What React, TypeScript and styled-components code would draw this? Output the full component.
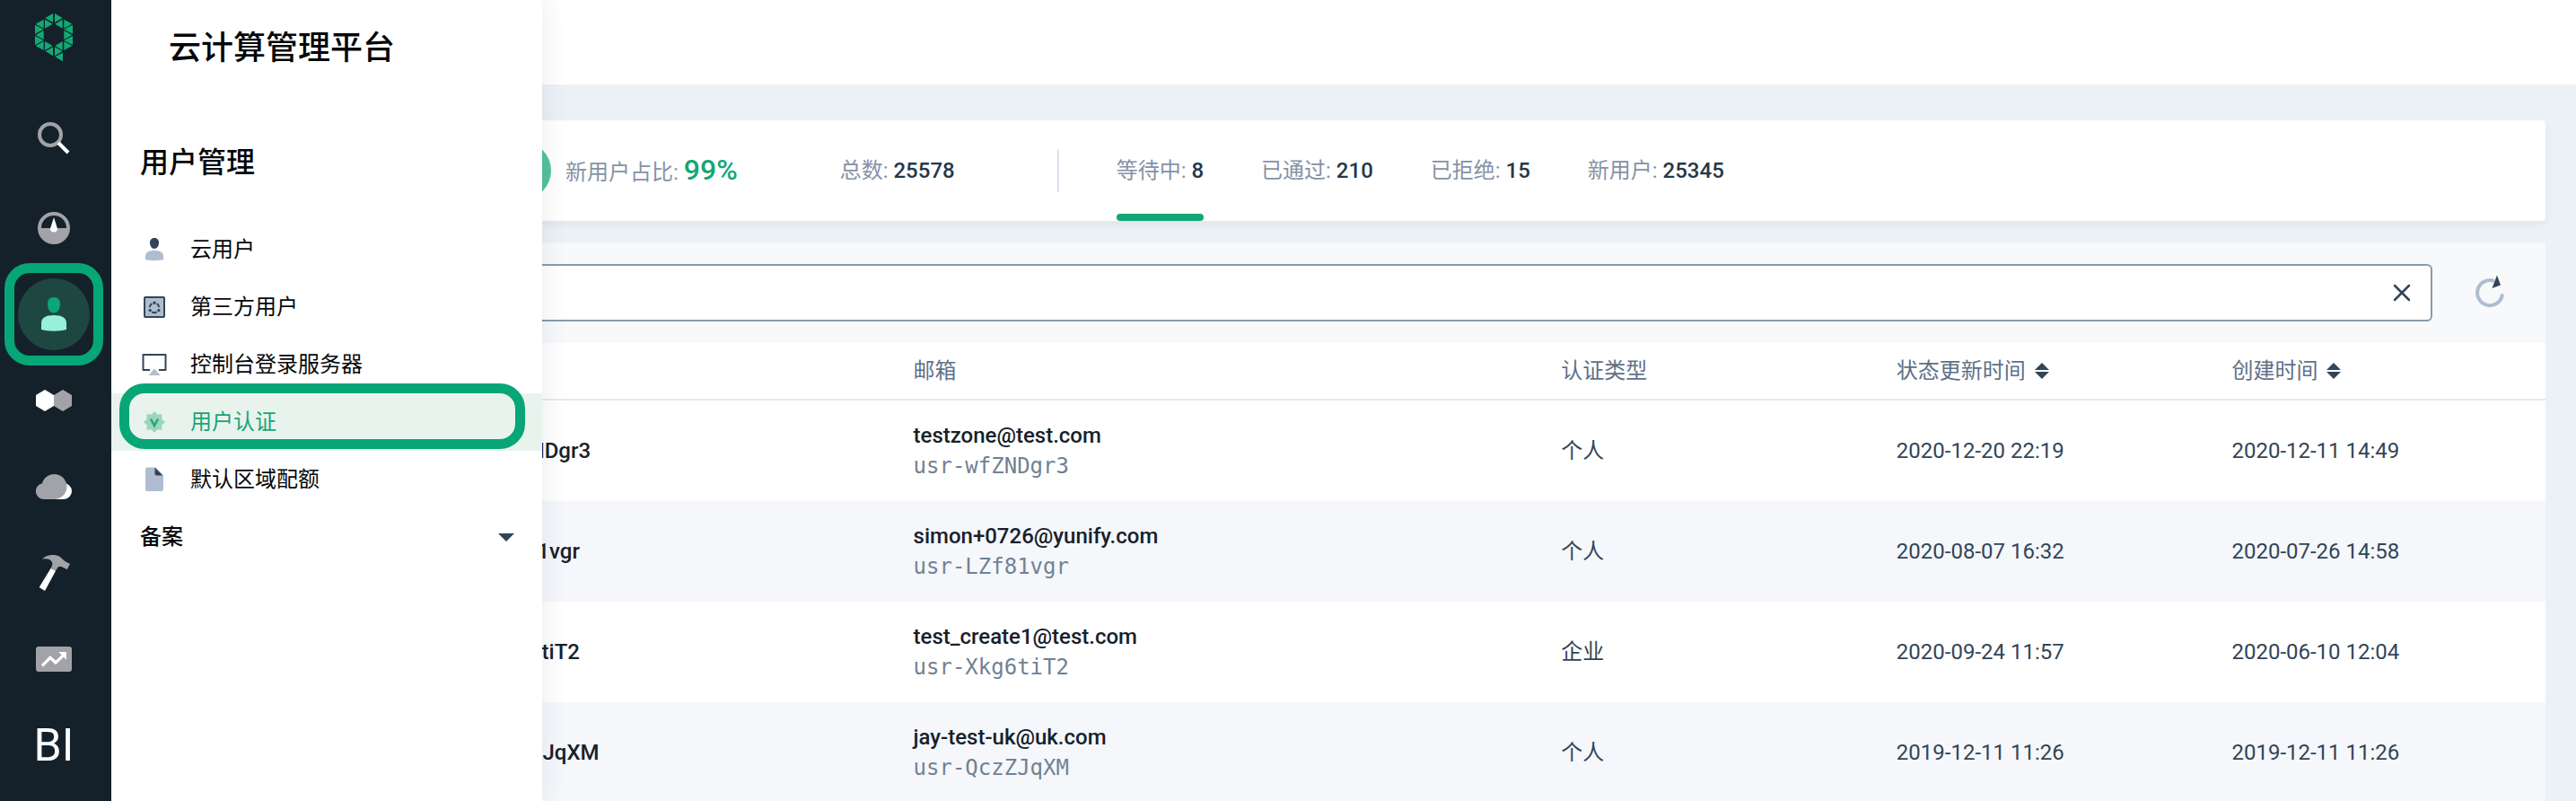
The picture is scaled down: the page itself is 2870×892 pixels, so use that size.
import React from 'react';
import styled, { createGlobalStyle } from 'styled-components';

const GlobalStyle = createGlobalStyle`
  *, *::before, *::after { box-sizing: border-box; }
  body {
    margin: 0;
    background: #ecf1f6;
    color: #324558;
    font-family: Roboto, "Noto Sans CJK SC", sans-serif;
    font-size: 24px;
    line-height: 34px;
  }
  button, input { font: inherit; color: inherit; }
  button { background: none; border: 0; padding: 0; cursor: pointer; }
  a { color: inherit; text-decoration: none; }
  svg { display: block; }
`;

const Layout = styled.div`
  display: flex;
  height: 100vh;
  overflow: hidden;
`;

/* ---------- dark rail ---------- */

const Rail = styled.nav`
  position: relative;
  z-index: 2;
  flex: none;
  display: flex;
  flex-direction: column;
  align-items: center;
  width: 124px;
  padding: 15px 4px 0 0;
  background: #15212a;
`;

const RailSearch = styled.button`
  display: grid;
  place-items: center;
  width: 80px;
  height: 80px;
  margin: 45px 0 12px;
`;

const RailLink = styled.a<{ $active?: boolean }>`
  position: relative;
  display: grid;
  place-items: center;
  width: 80px;
  height: 80px;
  margin: 8px 0;
  border-radius: 50%;
  background: ${p => (p.$active ? '#1e4742' : 'transparent')};
  color: #fff;
`;

const RailText = styled.span`
  font-size: 50px;
  font-weight: 400;
  line-height: 60px;
`;

const RailMarker = styled.span`
  position: absolute;
  inset: -17px -15px;
  border: 11px solid #07a676;
  border-radius: 28px;
`;

/* ---------- fly-out menu ---------- */

const Flyout = styled.aside`
  position: absolute;
  top: 0;
  left: 124px;
  z-index: 1;
  width: 480px;
  height: 100%;
  background: #fff;
  box-shadow: 0 0 28px rgba(36, 46, 66, 0.1);
  color: #050709;
`;

const Brand = styled.h1`
  margin: 0;
  padding: 30px 64px 28px;
  font-size: 36px;
  font-weight: 500;
  line-height: 48px;
`;

const MenuTitle = styled.h2`
  margin: 0;
  padding: 51px 32px 41px;
  font-size: 32px;
  font-weight: 500;
  line-height: 48px;
`;

const MenuLink = styled.a<{ $active?: boolean }>`
  position: relative;
  display: flex;
  align-items: center;
  gap: 24px;
  height: 64px;
  padding: 0 32px;
  background: ${p => (p.$active ? '#e9f3ee' : 'transparent')};
  color: ${p => (p.$active ? '#15a675' : 'inherit')};
`;

const MenuMarker = styled.span`
  position: absolute;
  inset: -11px 19px 2px 9px;
  border: 11px solid #07a676;
  border-radius: 28px;
`;

const MenuGroup = styled.button`
  display: flex;
  align-items: center;
  justify-content: space-between;
  width: 100%;
  height: 64px;
  padding: 0 24px 0 32px;
  font-weight: 500;
`;

/* ---------- page ---------- */

const Main = styled.main`
  flex: 1;
  min-width: 0;
`;

const TopBar = styled.header`
  height: 94px;
  background: #fff;
`;

const Content = styled.div`
  padding: 40px 34px 0;
`;

const Stats = styled.section`
  display: flex;
  align-items: center;
  height: 112px;
  margin-bottom: 24px;
  padding-left: 392px;
  background: #fff;
  border-radius: 4px;
  box-shadow: 0 4px 8px rgba(36, 46, 106, 0.06);
`;

const Pie = styled.span`
  width: 64px;
  height: 64px;
  margin-right: 16px;
  border-radius: 50%;
  background: #52c3a0;
`;

const Stat = styled.span`
  margin-right: 114px;
  color: #8592a6;
  white-space: nowrap;
`;

const Value = styled.strong<{ $accent?: boolean }>`
  color: ${p => (p.$accent ? '#15a675' : '#24384b')};
  font-size: ${p => (p.$accent ? '32px' : '24px')};
  font-weight: 500;
`;

const Divider = styled.span`
  width: 2px;
  height: 48px;
  background: #dae2ee;
`;

const Tabs = styled.div`
  display: flex;
  gap: 64px;
  height: 100%;
  margin-left: 64px;
`;

const Tab = styled.button<{ $active?: boolean }>`
  position: relative;
  height: 100%;
  color: #8592a6;
  white-space: nowrap;

  &::after {
    content: '';
    position: absolute;
    left: 0;
    right: 0;
    bottom: 0;
    height: 8px;
    border-radius: 4px;
    background: ${p => (p.$active ? '#15a675' : 'transparent')};
  }
`;

const Toolbar = styled.div`
  display: flex;
  align-items: center;
  gap: 24px;
  height: 112px;
  padding: 0 22px 0 24px;
  background: #f7f9fb;
`;

const SearchBox = styled.div`
  flex: 1;
  display: flex;
  align-items: center;
  height: 64px;
  padding: 0 12px 0 24px;
  background: #fff;
  border: 2px solid #879bac;
  border-radius: 6px;
`;

const SearchInput = styled.input`
  flex: 1;
  min-width: 0;
  border: 0;
  outline: 0;
  background: none;
`;

const IconButton = styled.button<{ $size: number }>`
  display: grid;
  place-items: center;
  width: ${p => p.$size}px;
  height: ${p => p.$size}px;
`;

const Table = styled.table`
  width: 100%;
  table-layout: fixed;
  border-collapse: separate;
  border-spacing: 0;
  background: #fff;
  text-align: left;
`;

const Head = styled.th`
  height: 64px;
  padding: 0 16px;
  border-bottom: 2px solid #e3e9ef;
  color: #5f708a;
  font-weight: 400;
`;

const SortButton = styled.button`
  display: flex;
  align-items: center;
  gap: 10px;
`;

const Row = styled.tr`
  &:nth-child(even) { background: #f5f7fb; }
`;

const Cell = styled.td`
  height: 112px;
  padding: 0 16px;
`;

const Primary = styled.div`
  color: #17212b;
  font-weight: 500;
`;

const Secondary = styled.div`
  color: #708294;
  font-family: "DejaVu Sans Mono", monospace;
`;

/* ---------- drawings ---------- */

const GREY = '#a1a3a8';
const DARK = '#324558';
const PALE = '#aebdd0';

const LOGO_TRIANGLES = [
  '60,0 60,30 34,15', '66,0 66,30 92,15',
  '33,20 33,50 59,35', '92,20 92,50 67,35',
  '29,20 29,50 2,35', '97,20 97,50 124,35',
  '0,38 0,68 29,53', '126,38 126,68 97,53',
  '29,57 29,87 2,72', '97,57 97,87 124,72',
  '0,75 0,105 29,90', '126,75 126,105 97,90',
  '29,93 29,123 2,108', '97,93 97,123 124,108',
  '33,93 33,123 59,108', '92,93 92,123 67,108',
  '60,112 60,142 35,126', '66,112 66,142 92,126',
  '93,131 93,160 67,145',
];

const Logo = () => (
  <svg width="42" height="54" viewBox="0 0 126 162" fill="#10ab73" aria-hidden="true">
    {LOGO_TRIANGLES.map(points => <polygon key={points} points={points} />)}
  </svg>
);

const SearchIcon = () => (
  <svg width="40" height="40" viewBox="0 0 40 40" fill="none" strokeWidth="4">
    <circle cx="16" cy="16" r="12" stroke={GREY} />
    <path d="M25 25 36 36" stroke="#fff" />
  </svg>
);

const GaugeIcon = () => (
  <svg width="40" height="40" viewBox="0 0 40 40">
    <circle cx="20" cy="20" r="16" fill="none" stroke={GREY} strokeWidth="4" />
    <path d="M4 20h32a16 16 0 0 1-32 0z" fill={GREY} />
    <path d="M20 8l4 12.500a4 4 0 1 1-8 0z" fill="#fff" />
  </svg>
);

const UserIcon = () => (
  <svg width="40" height="40" viewBox="0 0 40 40">
    <path d="M20 1c4.500 0 7 2.800 7 7 0 6-2.500 10.500-7 10.500S13 14 13 8c0-4.200 2.500-7 7-7z" fill="#0aa676" />
    <path d="M6 37v-7c0-6 5-9 14-9s14 3 14 9v7c-4 1.300-9 1.700-14 1.700S10 38.300 6 37z" fill="#97f1d8" />
  </svg>
);

const HexIcon = () => (
  <svg width="40" height="40" viewBox="0 0 40 40">
    <path d="M10 8l10 6v12l-10 6-10-6V14z" fill="#fff" />
    <path d="M30 8l10 6v12l-10 6-10-6V14z" fill={GREY} />
  </svg>
);

const CloudIcon = () => (
  <svg width="40" height="40" viewBox="0 0 40 40">
    <path d="M18 34V20h13a8 8 0 0 1 0-4 9 9 0 0 1 0 18z" fill="#fff" />
    <path d="M9 34a9 9 0 0 1-2-17.800A14 14 0 1 1 20 34z" fill={GREY} />
  </svg>
);

const HammerIcon = () => (
  <svg width="40" height="40" viewBox="120 114 120 120">
    <path d="M140 128c12-11 26-15 42-14 11 1 19 5 25 12 6 6 9 9 14 11l13 7-10 19-14-8c-9-5-16-2-19 4l-5 8-16-10c6-8 7-16 2-22-6-8-18-9-32-7z" fill={GREY} />
    <path d="M170 158l16 9-36 67-19-12z" fill="#fff" />
  </svg>
);

const ChartIcon = () => (
  <svg width="40" height="40" viewBox="0 0 120 120">
    <rect y="18" width="120" height="84" rx="9" fill={GREY} />
    <path d="M21 82l27-27 18 17 27-26" fill="none" stroke="#fff" strokeWidth="10" />
    <path d="M76 36h26v26z" fill="#fff" />
  </svg>
);

const SmallUserIcon = () => (
  <svg width="32" height="32" viewBox="0 0 32 32">
    <path d="M16 3c3 0 5 2 5 5 0 4-2 7-5 7s-5-3-5-7c0-3 2-5 5-5z" fill={DARK} />
    <path d="M6 27v-4c0-4 4-6 10-6s10 2 10 6v4c-3 1.500-17 1.500-20 0z" fill={PALE} />
  </svg>
);

const ThirdPartyIcon = () => (
  <svg width="32" height="32" viewBox="0 0 32 32">
    <rect x="5" y="5" width="22" height="22" rx="1" fill={PALE} stroke={DARK} strokeWidth="2" />
    <g fill="none" stroke={DARK} strokeWidth="2">
      <path d="M13.200 12.200a5.500 5.500 0 0 0-2.500 4M18.800 12.200a5.500 5.500 0 0 1 2.500 4M13.200 21.400a5.500 5.500 0 0 0 5.600 0" />
    </g>
    <g fill={DARK}>
      <circle cx="16" cy="11.300" r="1.700" />
      <circle cx="11.200" cy="19.600" r="1.700" />
      <circle cx="20.800" cy="19.600" r="1.700" />
    </g>
  </svg>
);

const ConsoleIcon = () => (
  <svg width="32" height="32" viewBox="0 0 32 32">
    <path d="M11 22H3.500V5h25v17H21" fill="none" stroke={DARK} strokeWidth="2" strokeLinejoin="round" />
    <path d="M16 20.500l6.500 7.500h-13z" fill={PALE} />
  </svg>
);

const BadgeIcon = () => (
  <svg width="32" height="32" viewBox="0 0 32 32">
    <path d="M16 4l3.300 3.500 5.200-.2-.2 5.200L28 16l-3.700 3.500.2 5.200-5.200-.2L16 28l-3.300-3.500-5.200.2.2-5.200L4 16l3.700-3.500-.2-5.200 5.200.2z" fill="#9cd5bf" />
    <path d="M12 12.500l4 7.500 4-7.500" fill="none" stroke="#20aa7b" strokeWidth="2.500" />
  </svg>
);

const FileIcon = () => (
  <svg width="32" height="32" viewBox="0 0 32 32">
    <path d="M8 2.500h9l9 9V27a2 2 0 0 1-2 2H8a2 2 0 0 1-2-2V4.500a2 2 0 0 1 2-2z" fill={PALE} />
    <path d="M16.500 2.500l9 9h-7a2 2 0 0 1-2-2z" fill={DARK} />
  </svg>
);

const CaretIcon = () => (
  <svg width="32" height="32" viewBox="0 0 32 32">
    <path d="M7 12h18l-9 9z" fill={DARK} />
  </svg>
);

const CloseIcon = () => (
  <svg width="24" height="24" viewBox="0 0 24 24">
    <path d="M4 4l16 16M20 4L4 20" stroke={DARK} strokeWidth="2.500" strokeLinecap="round" />
  </svg>
);

const RefreshIcon = () => (
  <svg width="40" height="40" viewBox="0 0 40 40">
    <path d="M25 7A14 14 0 1 0 34 21.500" fill="none" stroke={PALE} strokeWidth="4" />
    <path d="M28 0.500l4 11-9.500 3.500z" fill={DARK} />
  </svg>
);

const SortIcon = () => (
  <svg width="16" height="18" viewBox="0 0 16 18" fill={DARK}>
    <path d="M8 0l8 8H0zM8 18l8-8H0z" />
  </svg>
);

/* ---------- data ---------- */

const railItems = [
  { label: '概览', icon: <GaugeIcon /> },
  { label: '用户', icon: <UserIcon />, active: true },
  { label: '资源', icon: <HexIcon /> },
  { label: '云平台', icon: <CloudIcon /> },
  { label: '运维', icon: <HammerIcon /> },
  { label: '统计', icon: <ChartIcon /> },
  { label: 'BI', icon: <RailText>BI</RailText> },
];

const menuItems = [
  { label: '云用户', icon: <SmallUserIcon /> },
  { label: '第三方用户', icon: <ThirdPartyIcon /> },
  { label: '控制台登录服务器', icon: <ConsoleIcon /> },
  { label: '用户认证', icon: <BadgeIcon />, active: true },
  { label: '默认区域配额', icon: <FileIcon /> },
];

const tabs = [
  { label: '等待中', count: 8, active: true },
  { label: '已通过', count: 210 },
  { label: '已拒绝', count: 15 },
  { label: '新用户', count: 25345 },
];

const columns = ['14%', '17.5%', '26.95%', '13.95%', '13.95%', '13.65%'];

const rows = [
  { id: 'wfZNDgr3', email: 'testzone@test.com', type: '个人', updated: '2020-12-20 22:19', created: '2020-12-11 14:49' },
  { id: 'LZf81vgr', email: 'simon+0726@yunify.com', type: '个人', updated: '2020-08-07 16:32', created: '2020-07-26 14:58' },
  { id: 'Xkg6tiT2', email: 'test_create1@test.com', type: '企业', updated: '2020-09-24 11:57', created: '2020-06-10 12:04' },
  { id: 'QczZJqXM', email: 'jay-test-uk@uk.com', type: '个人', updated: '2019-12-11 11:26', created: '2019-12-11 11:26' },
];

export default function App() {
  return (
    <>
      <GlobalStyle />
      <Layout>
        <Rail>
          <Logo />
          <RailSearch aria-label="搜索"><SearchIcon /></RailSearch>
          {railItems.map(item => (
            <RailLink key={item.label} href="#" aria-label={item.label} $active={item.active}>
              {item.icon}
              {item.active && <RailMarker />}
            </RailLink>
          ))}
        </Rail>

        <Flyout>
          <Brand>云计算管理平台</Brand>
          <MenuTitle>用户管理</MenuTitle>
          {menuItems.map(item => (
            <MenuLink key={item.label} href="#" $active={item.active}>
              {item.icon}
              {item.label}
              {item.active && <MenuMarker />}
            </MenuLink>
          ))}
          <MenuGroup>
            备案
            <CaretIcon />
          </MenuGroup>
        </Flyout>

        <Main>
          <TopBar />
          <Content>
            <Stats>
              <Pie />
              <Stat>新用户占比: <Value $accent>99%</Value></Stat>
              <Stat>总数: <Value>25578</Value></Stat>
              <Divider />
              <Tabs>
                {tabs.map(tab => (
                  <Tab key={tab.label} $active={tab.active}>
                    {tab.label}: <Value>{tab.count}</Value>
                  </Tab>
                ))}
              </Tabs>
            </Stats>

            <Toolbar>
              <SearchBox>
                <SearchInput type="text" aria-label="搜索用户" />
                <IconButton $size={40} aria-label="清除"><CloseIcon /></IconButton>
              </SearchBox>
              <IconButton $size={80} aria-label="刷新"><RefreshIcon /></IconButton>
            </Toolbar>

            <Table>
              <colgroup>
                {columns.map((width, i) => <col key={i} style={{ width }} />)}
              </colgroup>
              <thead>
                <tr>
                  <Head />
                  <Head aria-label="用户" />
                  <Head>邮箱</Head>
                  <Head>认证类型</Head>
                  <Head><SortButton>状态更新时间<SortIcon /></SortButton></Head>
                  <Head><SortButton>创建时间<SortIcon /></SortButton></Head>
                </tr>
              </thead>
              <tbody>
                {rows.map(row => (
                  <Row key={row.id}>
                    <Cell />
                    <Cell><Primary>{row.id}</Primary></Cell>
                    <Cell>
                      <Primary>{row.email}</Primary>
                      <Secondary>usr-{row.id}</Secondary>
                    </Cell>
                    <Cell>{row.type}</Cell>
                    <Cell>{row.updated}</Cell>
                    <Cell>{row.created}</Cell>
                  </Row>
                ))}
              </tbody>
            </Table>
          </Content>
        </Main>
      </Layout>
    </>
  );
}
